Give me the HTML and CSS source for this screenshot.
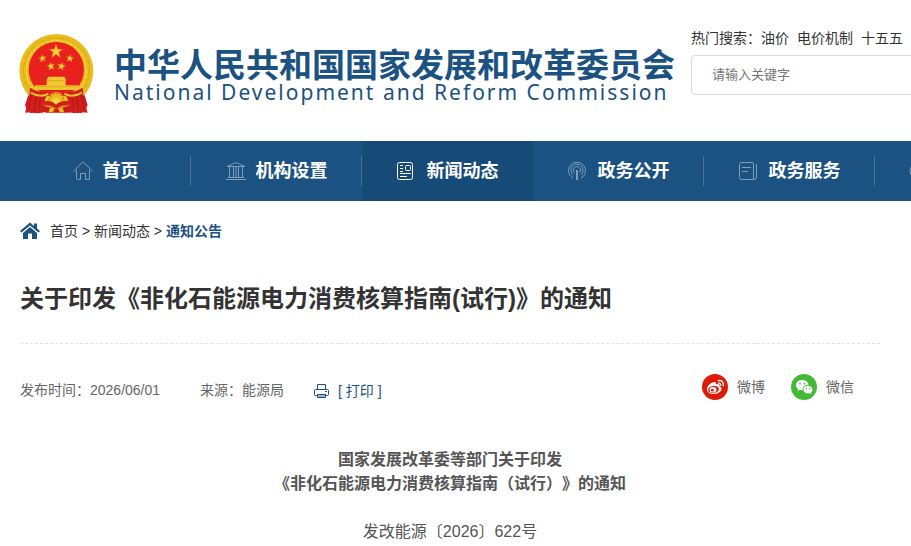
FILE: index.html
```html
<!DOCTYPE html>
<html lang="zh-CN">
<head>
<meta charset="utf-8">
<meta name="viewport" content="width=device-width, initial-scale=1">
<title>关于印发《非化石能源电力消费核算指南(试行)》的通知</title>
<link rel="stylesheet" href="styles.css">
</head>
<body>
<header class="header">
  <a class="brand" href="#">
    <svg class="emblem" viewBox="28 26 225 243" aria-hidden="true">
      <path fill="#cf1a1c" d="M62 190L46 240L54 256Q64 268 74 259Q86 268 98 259L110 262H174L184 259Q194 268 204 259Q216 268 226 255L234 240L219 190Z"/>
      <circle cx="140" cy="137" r="111" fill="#e9bd1f"/>
      <circle cx="140" cy="136" r="99" fill="none" stroke="#d6a516" stroke-width="3" stroke-dasharray="14 5"/>
      <circle cx="140" cy="136" r="90" fill="none" stroke="#f3d341" stroke-width="4" stroke-dasharray="10 5"/>
      <circle cx="140" cy="133" r="83" fill="#e9211e"/>
      <path fill="#f5ce35" stroke="#d79a1b" stroke-width="1" d="M139 57l5 15h15l-12 9 5 15-13-9-13 9 5-15-12-9h15zM98 88l3 7 8-1-6 6 4 7-8-3-6 6 1-8-7-4 8-2zM182 88l2 8 8 2-7 4 1 8-6-6-8 3 4-7-6-6 8 1zM122 112l4 6 8-1-5 6 4 8-8-3-6 6v-9l-7-4 8-2zM158 112l1 7 8 2-7 4v9l-6-6-8 3 4-8-5-6 8 1z"/>
      <path fill="#f0c72c" d="M115 154h50l5 12h-2v14h37v14H76v-14h35v-14h-1z"/>
      <path stroke="#d79d16" stroke-width="2" fill="none" d="M112 166h56M80 184h122"/>
      <path fill="#d21f1c" d="M61 187Q91 205 116 200L106 222L100 263Q88 258 76 264Q66 258 46 262L58 219ZM219 187Q189 205 164 200L174 222L180 263Q192 258 204 264Q214 258 234 262L222 219Z"/>
      <path fill="none" stroke="#b3121a" stroke-width="3" d="M65 207L57 254M79 215L74 258M92 219L88 254M215 207L223 254M201 215L206 258M188 219L192 254"/>
      <path fill="none" stroke="#efc42f" stroke-width="6" d="M63 202Q92 219 116 205M217 202Q188 219 164 205"/>
      <circle cx="140" cy="226" r="25" fill="#edbd21"/>
      <circle cx="140" cy="226" r="21" fill="none" stroke="#c98b12" stroke-width="5" stroke-dasharray="6 5"/>
      <circle cx="140" cy="228" r="10" fill="#f5d742"/>
      <path fill="#d21f1c" d="M101 229Q124 223 139 238Q156 223 179 229L174 241Q155 238 140 251Q125 238 106 241Z"/>
      <path fill="#edbd21" d="M121 246L135 251 129 261H117ZM159 246L145 251 151 261H163Z"/>
    </svg>
    <span class="brand-text">
      <span class="brand-cn">中华人民共和国国家发展和改革委员会</span>
      <span class="brand-en">National Development and Reform Commission</span>
    </span>
  </a>
  <form class="search">
    <div class="hot"><span>热门搜索：</span><a href="#">油价</a><a href="#">电价机制</a><a href="#">十五五</a></div>
    <input class="search-input" type="text" placeholder="请输入关键字" aria-label="请输入关键字">
  </form>
</header>

<nav class="nav">
  <a class="nav-item" href="#">
    <svg class="nav-icon" viewBox="0 0 20 20" aria-hidden="true"><path d="M.5 10.5L9 1.500Q10 .7 11 1.500L19.500 10.500M3.500 9V17.500Q3.500 18.500 4.500 18.500H7.500V12.500H12.500V18.500H16.500V9"/></svg>
    <span>首页</span>
  </a>
  <a class="nav-item" href="#">
    <svg class="nav-icon" viewBox="0 0 20 20" aria-hidden="true"><path d="M1 5.500L10 1.500 19 5.500ZM0 18.500H20M2 16.500H18M3.500 6V16M7.500 6V16M12.500 6V16M16.500 6V16M10 6V16"/></svg>
    <span>机构设置</span>
  </a>
  <a class="nav-item active" href="#">
    <svg class="nav-icon" viewBox="0 0 20 20" aria-hidden="true"><rect x=".5" y="1.500" width="15" height="17" rx="2"/><rect x="8.500" y="4.500" width="5" height="5" rx="1"/><path d="M3 4.500H6M3 7.500H6M3 10.500H6M3 12.500H14M3 15.500H10"/></svg>
    <span>新闻动态</span>
  </a>
  <a class="nav-item" href="#">
    <svg class="nav-icon" viewBox="0 0 20 20" aria-hidden="true"><path d="M5 17.200A8.500 8.500 0 1 1 13 17.200M5.500 14A6 6 0 1 1 12.500 14M6.500 11.500A3.500 3.500 0 1 1 11.500 11.500"/><path stroke-width="2" d="M9 9V19"/></svg>
    <span>政务公开</span>
  </a>
  <a class="nav-item" href="#">
    <svg class="nav-icon" viewBox="0 0 20 20" aria-hidden="true"><path d="M2.500 1.500H13Q14.500 1.500 14.500 3V18.500H2.500Q.5 18.500 .5 16.500V3.500Q.5 1.500 2.500 1.500ZM17.500 3V16.500Q17.500 18.500 14.500 18.500M3 6.500H12M3 10.500H9"/></svg>
    <span>政务服务</span>
  </a>
  <a class="nav-item last" href="#" aria-label="更多">
    <svg class="nav-icon" viewBox="0 0 20 20" aria-hidden="true"><circle cx="10" cy="10" r="9"/></svg>
  </a>
</nav>

<main class="content">
  <div class="crumbs">
    <svg class="home-icon" viewBox="0 0 20 18" aria-hidden="true"><path fill="#1b5282" d="M0 9L10 .5 14 4V1.500H17V6.500L20 9 18.500 10.500 10 3.500 1.500 10.500ZM3 11L10 5 17 11V17H12V11.500H8V17H3Z"/></svg>
    <div><a href="#">首页</a> &gt; <a href="#">新闻动态</a> &gt; <a class="current" href="#">通知公告</a></div>
  </div>
  <h1 class="title">关于印发《非化石能源电力消费核算指南(试行)》的通知</h1>
  <div class="meta">
    <span>发布时间：2026/06/01</span>
    <span>来源：能源局</span>
    <button class="print" type="button">
      <svg class="print-icon" viewBox="0 0 16 16" aria-hidden="true"><g fill="none" stroke="#1b5282"><path d="M3.500 6.500V1.500H11.500V6.500M3.500 12.500H1.500Q.5 12.500 .5 11.500V7.500Q.5 6.500 1.500 6.500H13.500Q14.500 6.500 14.500 7.500V11.500Q14.500 12.500 13.500 12.500H12"/><path fill="#9fb6cb" d="M3.500 11.500H11.500V14.500H3.500Z"/></g><path fill="#1b5282" d="M11 8H13V9H11Z"/></svg>
      <span>[ 打印 ]</span>
    </button>
    <div class="share">
      <a href="#">
        <svg class="share-icon" viewBox="0 0 26 26" aria-hidden="true"><circle cx="13" cy="13" r="13" fill="#dc1c08"/><path fill="#fff" d="M10.500 8.500C13 7.300 14.700 8.200 14 10.500C17 9.500 18.300 10.500 17.500 12.500C20 13.200 20.300 16 18 17.800C15 20.400 9.500 20.800 6.500 18.500C2.500 15.500 6.500 10.200 10.500 8.500Z"/><ellipse cx="11.500" cy="15.500" rx="5.500" ry="3.600" fill="#dc1c08" transform="rotate(-8 11.500 15.500)"/><ellipse cx="11" cy="15.700" rx="3.400" ry="2.800" fill="#fff"/><circle cx="10.300" cy="16.200" r="1.400" fill="#dc1c08"/><path fill="none" stroke="#fff" stroke-width="1.300" d="M16 9.200Q19 8.700 18.800 12M15.800 6.600Q22 5.700 21.300 12.200"/></svg>
        <span>微博</span>
      </a>
      <a href="#">
        <svg class="share-icon" viewBox="0 0 26 26" aria-hidden="true"><circle cx="13" cy="13" r="13" fill="#45b935"/><path fill="#fff" d="M11 6C15 6 17.500 8.500 17.500 10.800C13.500 10.800 11 13.300 11.700 16.200Q10 16.300 8.700 15.800L6.500 17L7 15C3 12 5 6 11 6Z"/><path fill="#fff" d="M16.800 11.800C20 11.800 21.700 14 21.400 16.200Q21.200 17.500 20 18.500L20.300 20.200L18.500 19.300C15 20 12.300 18 12.300 15.500C12.300 13.500 14.200 11.800 16.800 11.800Z"/><g fill="#45b935"><circle cx="9" cy="9.600" r=".9"/><circle cx="13.300" cy="9.600" r=".9"/><circle cx="15.300" cy="14.500" r=".7"/><circle cx="18.600" cy="14.500" r=".7"/></g></svg>
        <span>微信</span>
      </a>
    </div>
  </div>
  <article class="article">
    <h2>国家发展改革委等部门关于印发<br>《非化石能源电力消费核算指南（试行）》的通知</h2>
    <p>发改能源〔2026〕622号</p>
  </article>
</main>
</body>
</html>
```
FILE: styles.css
```css
* {
  box-sizing: border-box;
}

body {
  margin: 0;
  overflow-x: hidden;
  background: #fff;
  color: #333;
  font: 14px/24px "Liberation Sans", "Noto Sans CJK SC", sans-serif;
  text-spacing-trim: space-all;
}

a {
  color: inherit;
  text-decoration: none;
}

svg {
  display: block;
  flex: none;
}

.header {
  display: flex;
  align-items: flex-start;
  padding: 26px 0 26px 19px;
}

.brand {
  display: flex;
  flex: none;
  gap: 20px;
  padding-top: 8px;
  color: #1b5282;
}

.emblem {
  width: 75px;
  height: 81px;
}

.brand-text {
  display: flex;
  flex-direction: column;
  padding-top: 16px;
  white-space: nowrap;
}

.brand-cn {
  font-size: 33px;
  font-weight: 700;
  line-height: 32px;
}

.brand-en {
  font-family: "Noto Sans", sans-serif;
  font-size: 21px;
  line-height: 20px;
  letter-spacing: 2px;
}

.search {
  flex: 1;
  margin-left: 16px;
  min-width: 0;
}

.hot {
  display: flex;
  gap: 8px;
  white-space: nowrap;
}

.hot span {
  margin-right: -8px;
}

.search-input {
  display: block;
  width: calc(100% + 8px);
  height: 40px;
  margin-top: 5px;
  padding: 0 20px 2px;
  border: 1px solid #d9d9d9;
  border-radius: 4px;
  font: inherit;
  font-size: 13px;
}

.search-input::placeholder {
  color: #757575;
}

.nav {
  display: flex;
  height: 60px;
  padding-left: 20px;
  overflow: hidden;
  background: #1b5282;
  color: #fff;
  font-size: 18px;
  font-weight: 700;
}

.nav-item {
  position: relative;
  display: flex;
  flex: 0 0 171px;
  align-items: center;
  justify-content: center;
  gap: 10px;
  white-space: nowrap;
}

.nav-item::after {
  position: absolute;
  top: 15px;
  right: 0;
  width: 1px;
  height: 30px;
  background: #49759b;
  content: "";
}

.nav-item.active {
  background: #164a77;
}

.nav-item.active::after {
  display: none;
}

.nav-item.last {
  justify-content: flex-start;
  padding-left: 34px;
}

.nav-icon {
  width: 20px;
  height: 20px;
  fill: none;
  stroke: #7f9fbb;
}

.active .nav-icon {
  stroke: #fff;
}

.content {
  padding: 18px 31px 0 20px;
}

.crumbs {
  display: flex;
  align-items: center;
  gap: 10px;
}

.home-icon {
  width: 20px;
  height: 18px;
}

.current {
  color: #1b5282;
  font-weight: 700;
}

.title {
  margin: 38px 0 0;
  padding-bottom: 26px;
  border-bottom: 1px dashed #e3e3e3;
  font-size: 24px;
  line-height: 36px;
}

.meta {
  display: flex;
  align-items: center;
  gap: 40px;
  padding-top: 30px;
  color: #666;
}

.print {
  display: flex;
  align-items: center;
  gap: 8px;
  margin-left: -10px;
  padding: 2px 0 0;
  border: 0;
  background: none;
  color: #1b5282;
  font: inherit;
}

.print-icon {
  width: 16px;
  height: 16px;
}

.share {
  display: flex;
  gap: 26px;
  margin-left: auto;
  padding: 0 26px 6px 0;
}

.share a {
  display: flex;
  align-items: center;
  gap: 9px;
}

.share-icon {
  width: 26px;
  height: 26px;
}

.article {
  padding-top: 42px;
  color: #555;
  font-size: 16px;
  text-align: center;
}

.article h2 {
  margin: 0;
  font-size: 16px;
}

.article p {
  margin: 24px 0 0;
}
```
